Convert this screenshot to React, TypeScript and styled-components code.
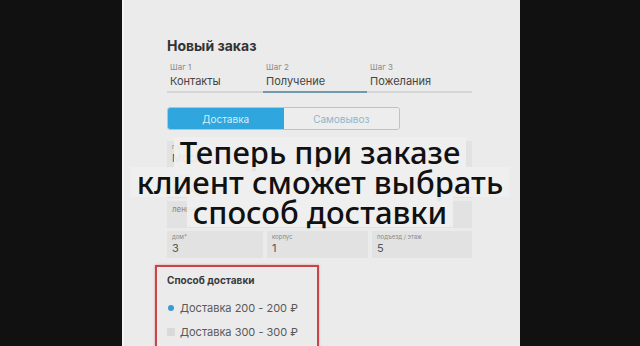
import styled, { createGlobalStyle } from 'styled-components';

const GlobalStyle = createGlobalStyle`
  html, body {
    margin: 0;
    padding: 0;
    background: #111111;
  }
  body {
    font-family: Inter, 'Noto Sans', sans-serif;
  }
`;

const Frame = styled.div`
  position: relative;
  width: 640px;
  height: 346px;
  display: flex;
  overflow: hidden;
  background: #111111;
`;

const Side = styled.div<{ w: number }>`
  width: ${(p) => p.w}px;
  flex-shrink: 0;
  background: #111111;
`;

const Screen = styled.div`
  width: 398px;
  flex-shrink: 0;
  background: #ebebeb;
  box-shadow: inset 2px 0 0 #f4f4f4;
  padding-left: 45px;
  box-sizing: border-box;
`;

const Form = styled.div`
  width: 305px;
  display: flex;
  flex-direction: column;
`;

const Title = styled.h1`
  margin: 38px 0 0;
  font-size: 14px;
  line-height: 16px;
  font-weight: 700;
  color: #333333;
`;

const Steps = styled.div`
  margin-top: 8px;
  display: grid;
  grid-template-columns: 96px 104px 1fr;
  border-bottom: 2px solid #d6d6d6;
`;

const Step = styled.div<{ active?: boolean }>`
  display: flex;
  flex-direction: column;
  gap: 2px;
  padding: 0 0 3px 3px;
  margin-bottom: -2px;
  border-bottom: 2px solid ${(p) => (p.active ? '#7299ab' : 'transparent')};
`;

const StepLabel = styled.span`
  font-size: 8px;
  line-height: 10px;
  color: #8a8a8a;
`;

const StepName = styled.span`
  font-size: 11px;
  line-height: 14px;
  color: #444444;
`;

const Segmented = styled.div`
  margin-top: 14px;
  width: 233px;
  height: 23px;
  display: flex;
  border-radius: 3px;
  overflow: hidden;
  border: 1px solid #aac8d6;
  box-sizing: border-box;
`;

const Segment = styled.div<{ active?: boolean }>`
  flex: 1;
  display: flex;
  align-items: center;
  justify-content: center;
  font-size: 10px;
  background: ${(p) => (p.active ? '#2fa6dd' : '#ededed')};
  color: ${(p) => (p.active ? '#d3eefa' : '#8fb6cc')};
`;

const Fields = styled.div`
  margin-top: 11px;
  display: flex;
  flex-direction: column;
  gap: 3px;
`;

const FieldRow = styled.div`
  display: grid;
  grid-template-columns: 96px 101px 1fr;
  gap: 4px;
`;

const Field = styled.div`
  height: 27px;
  background: #e2e2e2;
  padding: 2px 5px 0;
  box-sizing: border-box;
  display: flex;
  flex-direction: column;
`;

const FieldLabel = styled.span<{ big?: boolean }>`
  font-size: ${(p) => (p.big ? 8 : 6)}px;
  line-height: 8px;
  margin-top: ${(p) => (p.big ? 2 : 0)}px;
  color: #888888;
`;

const FieldValue = styled.span`
  margin-top: 1px;
  font-size: 11px;
  line-height: 13px;
  color: #555555;
`;

const Highlight = styled.div`
  margin: 7px 0 0 -12px;
  width: 164px;
  height: 100px;
  border: 2px solid #c8454a;
  box-shadow: 0 0 2px rgba(200, 69, 74, 0.5);
  padding: 7px 10px 0;
  box-sizing: border-box;
  display: flex;
  flex-direction: column;
`;

const GroupTitle = styled.div`
  font-size: 10px;
  line-height: 12px;
  font-weight: 700;
  color: #3a3a3a;
`;

const Options = styled.div`
  margin-top: 15px;
  display: flex;
  flex-direction: column;
  gap: 10px;
`;

const Option = styled.div`
  display: flex;
  align-items: center;
  gap: 5px;
  font-size: 11px;
  line-height: 14px;
  color: #5a5a5a;
`;

const Radio = styled.span<{ checked?: boolean }>`
  width: ${(p) => (p.checked ? 6 : 8)}px;
  height: ${(p) => (p.checked ? 6 : 8)}px;
  margin: 0 ${(p) => (p.checked ? 1 : 0)}px;
  border-radius: ${(p) => (p.checked ? '50%' : '1px')};
  background: ${(p) => (p.checked ? '#3a9ad2' : '#d9d9d9')};
  flex-shrink: 0;
`;

// субтитр поверх видео
const Caption = styled.div`
  position: absolute;
  top: 137px;
  left: 0;
  right: 0;
  text-align: center;
  font-family: 'Noto Sans', 'Open Sans', sans-serif;
  font-size: 31px;
  font-weight: 500;
  color: #111111;
`;

const CaptionLine = styled.div`
  line-height: 30px;
  span {
    display: inline-block;
    padding: 0 6px;
    background: rgba(239, 239, 239, 0.94);
  }
`;

const captionLines = ['Теперь при заказе', 'клиент сможет выбрать', 'способ доставки'];

const App = () => {
  return (
    <>
      <GlobalStyle />
      <Frame>
        <Side w={122} />
        <Screen>
          <Form>
            <Title>Новый заказ</Title>
            <Steps>
              <Step>
                <StepLabel>Шаг 1</StepLabel>
                <StepName>Контакты</StepName>
              </Step>
              <Step active>
                <StepLabel>Шаг 2</StepLabel>
                <StepName>Получение</StepName>
              </Step>
              <Step>
                <StepLabel>Шаг 3</StepLabel>
                <StepName>Пожелания</StepName>
              </Step>
            </Steps>
            <Segmented>
              <Segment active>Доставка</Segment>
              <Segment>Самовывоз</Segment>
            </Segmented>
            <Fields>
              <Field>
                <FieldLabel>город*</FieldLabel>
                <FieldValue>Москва</FieldValue>
              </Field>
              <Field>
                <FieldLabel>улица*</FieldLabel>
                <FieldValue>Ленина</FieldValue>
              </Field>
              <Field>
                <FieldLabel big>ленина</FieldLabel>
              </Field>
              <FieldRow>
                <Field>
                  <FieldLabel>дом*</FieldLabel>
                  <FieldValue>3</FieldValue>
                </Field>
                <Field>
                  <FieldLabel>корпус</FieldLabel>
                  <FieldValue>1</FieldValue>
                </Field>
                <Field>
                  <FieldLabel>подъезд / этаж</FieldLabel>
                  <FieldValue>5</FieldValue>
                </Field>
              </FieldRow>
            </Fields>
            <Highlight>
              <GroupTitle>Способ доставки</GroupTitle>
              <Options>
                <Option>
                  <Radio checked />
                  Доставка 200 - 200 ₽
                </Option>
                <Option>
                  <Radio />
                  Доставка 300 - 300 ₽
                </Option>
              </Options>
            </Highlight>
          </Form>
        </Screen>
        <Side w={120} />
        <Caption>
          {captionLines.map((line) => (
            <CaptionLine key={line}>
              <span>{line}</span>
            </CaptionLine>
          ))}
        </Caption>
      </Frame>
    </>
  );
};

export default App;
